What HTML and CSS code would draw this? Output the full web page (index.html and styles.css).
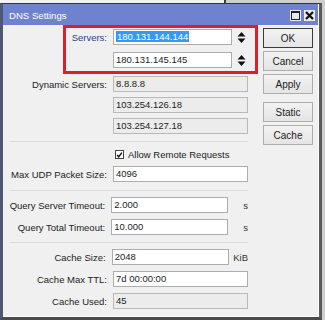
FILE: index.html
```html
<!DOCTYPE html>
<html>
<head>
<meta charset="utf-8">
<link rel="stylesheet" href="styles.css">
</head>
<body>
<div class="window">
  <div class="titlebar">
    <span class="title">DNS Settings</span>
    <span class="tbtns">
      <span class="tbtn"><svg width="9" height="9" viewBox="0 0 9 9"><rect x="0.5" y="0.5" width="8" height="8" fill="none" stroke="#222"/><rect x="0" y="0" width="9" height="2" fill="#222"/></svg></span>
      <span class="tbtn"><svg width="9" height="9" viewBox="0 0 9 9"><path d="M1 1 L8 8 M8 1 L1 8" stroke="#111" stroke-width="2.2"/></svg></span>
    </span>
  </div>
  <div class="content">
    <div class="form">
      <div class="row">
        <span class="label focus">Servers:</span>
        <span class="field short"><span class="sel">180.131.144.144</span></span>
        <svg class="spin" width="9" height="13" viewBox="0 0 9 13"><path d="M0.5 5.5 L4.5 1 L8.5 5.5 Z M0.5 7.5 L8.5 7.5 L4.5 12 Z" fill="#111"/></svg>
      </div>
      <div class="row r-tight">
        <span class="label"></span>
        <span class="field short">180.131.145.145</span>
        <svg class="spin" width="9" height="13" viewBox="0 0 9 13"><path d="M0.5 5.5 L4.5 1 L8.5 5.5 Z M0.5 7.5 L8.5 7.5 L4.5 12 Z" fill="#111"/></svg>
      </div>
      <div class="row r-group">
        <span class="label">Dynamic Servers:</span>
        <span class="field ro">8.8.8.8</span>
      </div>
      <div class="row r-small">
        <span class="label"></span>
        <span class="field ro">103.254.126.18</span>
      </div>
      <div class="row r-small">
        <span class="label"></span>
        <span class="field ro">103.254.127.18</span>
      </div>
      <div class="sep s1"></div>
      <div class="checkrow">
        <span class="check"><svg width="9" height="9" viewBox="0 0 9 9"><path d="M1.5 4.5 L3.5 7 L7.5 1.5" fill="none" stroke="#111" stroke-width="1.8"/></svg></span>
        <span class="checklabel">Allow Remote Requests</span>
      </div>
      <div class="row r-udp">
        <span class="label">Max UDP Packet Size:</span>
        <span class="field">4096</span>
      </div>
      <div class="sep s2"></div>
      <div class="row r-after">
        <span class="label">Query Server Timeout:</span>
        <span class="field short">2.000</span>
        <span class="unit u-s">s</span>
      </div>
      <div class="row r-std">
        <span class="label">Query Total Timeout:</span>
        <span class="field short">10.000</span>
        <span class="unit u-s">s</span>
      </div>
      <div class="sep s3"></div>
      <div class="row r-after">
        <span class="label">Cache Size:</span>
        <span class="field short">2048</span>
        <span class="unit">KiB</span>
      </div>
      <div class="row r-std">
        <span class="label">Cache Max TTL:</span>
        <span class="field">7d 00:00:00</span>
      </div>
      <div class="row r-std">
        <span class="label">Cache Used:</span>
        <span class="field ro">45</span>
      </div>
    </div>
    <div class="buttons">
      <div class="btn default">OK</div>
      <div class="btn">Cancel</div>
      <div class="btn">Apply</div>
      <div class="btn gap">Static</div>
      <div class="btn">Cache</div>
    </div>
  </div>
  <div class="highlight"></div>
</div>
</body>
</html>
```

FILE: styles.css
```css
html, body {
  margin: 0;
  padding: 0;
}
body {
  width: 325px;
  height: 320px;
  overflow: hidden;
  background: linear-gradient(to right, #f2f2f2 0 224px, #3c3c3c 224px 226px, #cfcfcf 226px);
  font-family: "Liberation Sans", Arial, sans-serif;
  font-size: 9.5px;
  color: #1c1c1c;
}
.window {
  position: relative;
  margin-top: 3px;
  width: 316px;
  height: 313px;
  border-left: 3px solid #4d5873;
  border-right: 3px solid #5a5a5a;
  border-top: 1px solid #2f3550;
  border-bottom: 3px solid #4a4a4a;
  background: #f0f0f0;
  box-shadow: inset -1px 0 0 #ffffff;
}
.titlebar {
  height: 21px;
  background: #6f82cf;
  display: flex;
  align-items: center;
  justify-content: space-between;
  padding: 0 4px 0 6px;
  box-shadow: inset -1px 0 0 #ffffff;
}
.title {
  color: #ffffff;
  font-size: 9.6px;
  margin-top: 1px;
}
.tbtns {
  display: flex;
  gap: 3px;
  margin-top: 1px;
}
.tbtn {
  width: 11px;
  height: 11px;
  background: #e8e8ee;
  display: flex;
  align-items: center;
  justify-content: center;
}
.content {
  display: flex;
  height: 291px;
  border-bottom: 1px solid #ffffff;
}
.form {
  width: 245px;
  padding-top: 4px;
  display: flex;
  flex-direction: column;
}
.row {
  display: flex;
  align-items: center;
  height: 16px;
}
.r-tight { margin-top: 7px; }
.r-group { margin-top: 8px; }
.r-small { margin-top: 5px; }
.r-udp { margin-top: 5px; }
.r-after { margin-top: 6px; }
.r-std { margin-top: 6px; }
.label {
  width: 104px;
  text-align: right;
  margin-right: 6px;
  white-space: nowrap;
  color: #222;
}
.label.focus {
  color: #2d3f86;
}
.field {
  box-sizing: border-box;
  width: 135px;
  height: 16px;
  line-height: 14px;
  border: 1px solid #abadb3;
  background: #ffffff;
  padding-left: 2px;
  white-space: nowrap;
}
.field.short {
  width: 119px;
}
.field.ro {
  background: #ececec;
  border-color: #b9b9b9;
}
.sel {
  background: #3399ff;
  color: #ffffff;
  padding: 0 1px;
}
.spin {
  margin-left: 5px;
}
.unit {
  margin-left: 4px;
  color: #333;
}
.unit.u-s {
  margin-left: 15px;
}
.sep {
  height: 1px;
  margin-left: 7px;
  background: #dadada;
}
.s1 { margin-top: 7px; }
.s2 { margin-top: 8px; }
.s3 { margin-top: 7px; }
.checkrow {
  display: flex;
  align-items: center;
  height: 13px;
  margin-top: 6px;
  padding-left: 112px;
}
.check {
  box-sizing: border-box;
  width: 9px;
  height: 9px;
  border: 1px solid #444;
  background: #ffffff;
  display: flex;
  align-items: center;
  justify-content: center;
}
.check svg {
  width: 8px;
  height: 8px;
}
.checklabel {
  margin-left: 4px;
}
.buttons {
  margin-left: 15px;
  padding-top: 3px;
  display: flex;
  flex-direction: column;
  gap: 3px;
}
.btn {
  box-sizing: border-box;
  width: 50px;
  height: 20px;
  border: 1px solid #adadad;
  background: linear-gradient(#f2f2f2, #e4e4e4);
  display: flex;
  align-items: center;
  justify-content: center;
  font-size: 10px;
}
.btn.default {
  border-color: #3c3c3c;
}
.btn.gap {
  margin-top: 5px;
}
.highlight {
  position: absolute;
  left: 60px;
  top: 21px;
  width: 195px;
  height: 49px;
  box-sizing: border-box;
  border: 3px solid #dc1f2b;
  pointer-events: none;
}
```
